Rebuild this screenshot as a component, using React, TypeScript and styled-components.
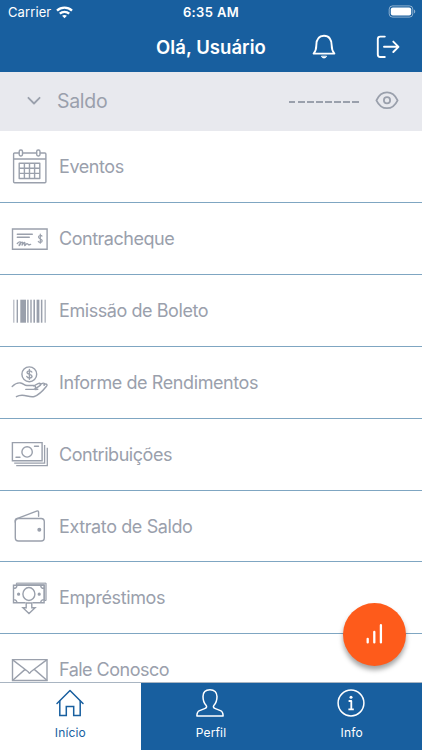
import React from "react";
import styled, { createGlobalStyle } from "styled-components";

const BLUE = "#185f9f";
const GRAY = "#9aa0ac";

const GlobalStyle = createGlobalStyle`
  * { box-sizing: border-box; }
  body { margin: 0; background: #fff; font-family: Inter, "Liberation Sans", sans-serif; }
`;

const Screen = styled.div`
  height: 750px;
  width: 422px;
  display: flex;
  flex-direction: column;
  overflow: hidden;
  position: relative;
  background: #fff;
`;

const Top = styled.header`
  flex: none;
  height: 72px;
  background: ${BLUE};
  color: #fff;
`;

const StatusBar = styled.div`
  height: 24px;
  padding: 0 8px;
  display: grid;
  grid-template-columns: 1fr auto 1fr;
  align-items: center;
`;

const Carrier = styled.div`
  display: flex;
  align-items: center;
  gap: 5px;
  font-size: 13px;
  letter-spacing: 0.1px;
`;

const Clock = styled.div`
  font-size: 13px;
  font-weight: 600;
  letter-spacing: 0.35px;
`;

const Battery = styled.svg`
  justify-self: end;
  margin: 0 -2px 1px 0;
`;

const TitleBar = styled.div`
  height: 45px;
  display: grid;
  grid-template-columns: 1fr auto 1fr;
  align-items: center;
`;

const Title = styled.h1`
  grid-column: 2;
  margin: 0;
  font-size: 18.5px;
  font-weight: 600;
  letter-spacing: 0.05px;
`;

const Actions = styled.div`
  display: flex;
  justify-content: flex-end;
  gap: 37px;
  padding-right: 21px;
`;

const Balance = styled.div`
  flex: none;
  height: 58.5px;
  background: #e8e9ee;
  color: ${GRAY};
  display: flex;
  align-items: center;
  padding: 0 23px 0 26px;
`;

const BalanceLabel = styled.span`
  margin-left: 15px;
  font-size: 19.5px;
  letter-spacing: -0.3px;
  flex: 1;
`;

const Masked = styled.div`
  display: flex;
  gap: 2.4px;
  margin: 1px 16px 0 0;
`;

const Dash = styled.i`
  width: 6.7px;
  height: 1.5px;
  background: ${GRAY};
`;

const List = styled.main`
  flex: 1;
  min-height: 0;
  overflow: hidden;
  padding-top: 1px;
`;

const Row = styled.div`
  height: 71.83px;
  display: flex;
  align-items: center;
  padding-left: 10px;
  border-bottom: 1px solid #7fa6c2;
  color: ${GRAY};
`;

const RowLabel = styled.span<{ $spacing: number }>`
  margin-left: 9px;
  font-size: 18px;
  letter-spacing: ${(p) => p.$spacing}px;
  white-space: nowrap;
`;

const Tabs = styled.nav`
  flex: none;
  height: 68px;
  display: grid;
  grid-template-columns: repeat(3, 1fr);
  border-top: 1px solid #a9b5c2;
  background: ${BLUE};
`;

const Tab = styled.div<{ $active?: boolean }>`
  display: flex;
  flex-direction: column;
  align-items: center;
  padding-top: 4px;
  gap: 6px;
  font-size: 12px;
  line-height: 16px;
  letter-spacing: 0.15px;
  background: ${(p) => (p.$active ? "#fff" : BLUE)};
  color: ${(p) => (p.$active ? BLUE : "#fff")};
`;

const TabIcon = styled.svg`
  flex: none;
  display: block;
  margin-right: 1px;
  fill: none;
  stroke: currentColor;
  stroke-width: 1.5;
  stroke-linecap: round;
  stroke-linejoin: round;
`;

const Fab = styled.button`
  position: absolute;
  left: 343px;
  top: 603px;
  width: 63px;
  height: 63px;
  padding: 0;
  border: 0;
  border-radius: 50%;
  background: #fe5b1b;
  box-shadow: 0 4px 5px rgba(0, 0, 0, 0.36);
  display: flex;
  align-items: center;
  justify-content: center;
`;

const LineIcon = styled.svg`
  flex: none;
  display: block;
  fill: none;
  stroke: currentColor;
  stroke-linecap: round;
  stroke-linejoin: round;
`;

const RowIcon = ({ children }: { children: React.ReactNode }) => (
  <LineIcon width="40" height="44" viewBox="0 0 40 44" strokeWidth="1.4">{children}</LineIcon>
);

const Calendar = () => (
  <RowIcon>
    <path d="M9 8H4.6a1 1 0 0 0-1 1v27.7a1 1 0 0 0 1 1h30.3a1 1 0 0 0 1-1V9a1 1 0 0 0-1-1h-4.5M12.7 8h13.8M3.6 14h32.3" />
    <rect x="9.2" y="5" width="3.3" height="6" rx="1.4" />
    <rect x="26.7" y="5" width="3.3" height="6" rx="1.4" />
    <path d="M9.2 18.2h20.6v15.3H9.2zM14.4 18.2v15.3M19.5 18.2v15.3M24.6 18.2v15.3M9.2 23.3h20.6M9.2 28.4h20.6" />
  </RowIcon>
);

const Cheque = () => (
  <RowIcon>
    <path strokeLinejoin="miter" d="M2.5 12h34.6v20.3H2.5z" />
    <path d="M7.3 17.3h15M7.3 20.3h12M7.3 26.4c2.4-2.4 4-1.7 3 .6s-2 1.5-.3-.4 3-2 2.4 0-.5 2 .6.2 2.2-1.7 1.8.2-.2 2 1 .6 1.5-1 2.4-.2 1.4.2 2.4 0" />
    <path d="M32 19.1c-.7-1-3.5-1-3.5 1 0 2.1 3.7 1.6 3.7 3.7 0 2-3 2.1-3.9.7M30.3 17v9.2" strokeWidth="1.2" />
  </RowIcon>
);

const bars: [number, number][] = [
  [3.4, 0.9], [6.6, 1.4], [10.3, 5.7], [17.2, 1.4], [20.3, 1.4], [23.4, 1.6], [26.6, 2.8], [30.9, 1.5], [34.6, 1.1],
];

const Barcode = () => (
  <RowIcon>
    {bars.map(([x, w]) => (
      <rect key={x} x={x} y="10.7" width={w} height="23" fill="currentColor" stroke="none" />
    ))}
  </RowIcon>
);

const Hand = () => (
  <RowIcon>
    <circle cx="19.3" cy="14.3" r="7.4" />
    <path d="M21.8 12c-.8-1.7-4.8-1.5-4.8.5 0 2.4 5 1.2 5 3.8 0 2.1-4.3 2.2-5.2.2M19.4 9.4v9.8" />
    <path d="M2.2 26.4c2.2-2.1 5.6-4 8.4-3.4 3.3.7 3.5 2.5 6.3 2.5h6.6c2.7 0 2.8 3.9 0 3.9H15.8M23.5 26l4.6-2.4c2.2-1 3.5 1 1.8 2.1l-4.4 3M30 24.5l2.4-1.1c1.7-.8 3.1.6 1.8 1.8M33.8 24.9l1.2-.7c1.7-.7 2.7.8 1.5 2.1-3 3.7-7.5 8.8-12.2 10.2-5.9 1.7-10.8-4.1-17.9.2" />
    <path d="M25 29.5l2.8-.3" />
  </RowIcon>
);

const Banknotes = () => (
  <RowIcon>
    <g strokeLinejoin="miter">
      <path d="M2.4 10.6h29.7v18.2H2.4z" />
      <path d="M34.6 13v18.2H4.2M37.3 15.7v18H6.2" strokeLinecap="butt" strokeWidth="1.3" />
    </g>
    <circle cx="17.1" cy="19.9" r="5.2" />
    <path d="M24.5 14.3h4M6 25.2h4" />
  </RowIcon>
);

const Wallet = () => (
  <RowIcon>
    <rect x="5.3" y="14.5" width="29" height="22.5" rx="3.2" />
    <path d="M5.3 18c-.4-2.1.4-3.2 2.3-3.7L26.6 7.1c1.4-.5 2 .1 2 1.2v4" />
    <circle cx="29.3" cy="25.8" r="1.3" fill="currentColor" />
  </RowIcon>
);

const Loan = () => (
  <RowIcon>
    <g strokeLinejoin="miter">
      <path d="M6.4 8.6V7.1h29.7v17.4h-1.8V8.9H6.4z" fill="currentColor" fillOpacity=".4" strokeWidth="1" />
      <path d="M15 26.8H3.5V9.2h30.6v17.6H23M3.5 12.4c2 0 3.4-1.3 3.4-3.2M34.1 12.4c-2 0-3.4-1.3-3.4-3.2M3.5 23.6c2 0 3.4 1.3 3.4 3.2M34.1 23.6c-2 0-3.4 1.3-3.4 3.2" />
      <path d="M16.2 27v4.8h-3.3l6.1 5.8 6.1-5.8h-3.3V27z" />
    </g>
    <ellipse cx="18.9" cy="18" rx="6" ry="6.5" />
    <circle cx="8.6" cy="18.2" r=".9" fill="currentColor" />
    <circle cx="29.2" cy="18.2" r=".9" fill="currentColor" />
  </RowIcon>
);

const Envelope = () => (
  <RowIcon>
    <path strokeLinejoin="miter" d="M2.5 11.6h34.5v20.9H2.5z" />
    <path d="M2.7 11.9l14.8 11.4c1.2.9 1.5 1.9 2 1.9s.8-1 2-1.9l15.2-11.4M2.8 32.2l12.3-10.8M36.8 32.2L24.3 21.4" />
  </RowIcon>
);

const rows = [
  { label: "Eventos", Icon: Calendar, spacing: -0.42 },
  { label: "Contracheque", Icon: Cheque, spacing: -0.48 },
  { label: "Emissão de Boleto", Icon: Barcode, spacing: -0.43 },
  { label: "Informe de Rendimentos", Icon: Hand, spacing: -0.41 },
  { label: "Contribuições", Icon: Banknotes, spacing: -0.46 },
  { label: "Extrato de Saldo", Icon: Wallet, spacing: -0.39 },
  { label: "Empréstimos", Icon: Loan, spacing: -0.4 },
  { label: "Fale Conosco", Icon: Envelope, spacing: -0.52 },
];

export default function App() {
  return (
    <Screen>
      <GlobalStyle />
      <Top>
        <StatusBar>
          <Carrier>
            Carrier
            <svg width="17" height="13" viewBox="0 0 17 13" fill="none" stroke="#fff" strokeWidth="2.3">
              <path d="M1 4.7c4.2-4 10.8-4 15 0M3.8 7.7c2.6-2.5 6.8-2.5 9.4 0" />
              <path d="M8.5 12.2L6.1 9.8c1.3-1.2 3.5-1.2 4.8 0z" fill="#fff" stroke="none" />
            </svg>
          </Carrier>
          <Clock>6:35 AM</Clock>
          <Battery width="28" height="13" viewBox="0 0 28 13">
            <rect x="1.2" y=".9" width="23.6" height="11.2" rx="3.3" fill="none" stroke="#fff" strokeOpacity=".5" />
            <rect x="2.8" y="2.5" width="20.4" height="8" rx="2" fill="#fff" />
            <path d="M26 4.5c1.7.8 1.7 3.2 0 4z" fill="#fff" fillOpacity=".5" />
          </Battery>
        </StatusBar>
        <TitleBar>
          <Title>Olá, Usuário</Title>
          <Actions>
            <LineIcon width="28" height="28" viewBox="0 0 28 28" strokeWidth="1.9">
              <path d="M3.6 20.6h20.8c-1.8-2-2.7-3.4-2.7-8C21.7 6.2 19 2.8 14 2.8s-7.7 3.4-7.7 9.8c0 4.6-.9 6-2.7 8z" />
              <path d="M11.5 23.5c.7 2.1 4.3 2.1 5 0z" fill="#fff" strokeWidth=".8" />
            </LineIcon>
            <LineIcon width="26" height="28" viewBox="0 0 26 28" strokeWidth="1.9">
              <path d="M9.8 3.6H5.2C3.7 3.6 2.8 4.6 2.8 6.1v15.4c0 1.5.9 2.5 2.4 2.5h4.6M9 13.8h14.2M18.3 8.6l5.2 5.2-5.2 5.2" />
            </LineIcon>
          </Actions>
        </TitleBar>
      </Top>
      <Balance>
        <LineIcon width="16" height="16" viewBox="0 0 16 16" strokeWidth="1.8">
          <path d="M2.4 4.8L8 10.5l5.6-5.7" />
        </LineIcon>
        <BalanceLabel>Saldo</BalanceLabel>
        <Masked>{Array.from({ length: 8 }, (_, i) => <Dash key={i} />)}</Masked>
        <LineIcon width="24" height="20" viewBox="0 0 24 20" strokeWidth="1.8">
          <path d="M1.4 9.3C3.6 4.7 7.2 1.4 12 1.4S20.4 4.7 22.6 9.3c-2.2 4.6-5.8 7.9-10.6 7.9S3.6 13.9 1.4 9.3z" />
          <circle cx="12" cy="9.3" r="3.1" />
        </LineIcon>
      </Balance>
      <List>
        {rows.map(({ label, Icon, spacing }) => (
          <Row key={label}>
            <Icon />
            <RowLabel $spacing={spacing}>{label}</RowLabel>
          </Row>
        ))}
      </List>
      <Tabs>
        <Tab $active>
          <TabIcon width="32" height="32" viewBox="0 0 32 32">
            <path d="M3 16.5L16 3.5l13 13" />
            <path d="M5.8 14v14.5h6.5v-9h7.4v9h6.5V14" strokeLinejoin="miter" />
          </TabIcon>
          Início
        </Tab>
        <Tab>
          <TabIcon width="32" height="32" viewBox="0 0 32 32">
            <path d="M16 2.7c-4.3 0-7 2.5-7 6.8 0 4 1 6.8 3.2 9 .9 1 .2 2.4-1 2.9l-5.6 2.2c-2 .8-2.7 2.1-2.7 5.3h26.2c0-3.2-.7-4.5-2.7-5.3l-5.6-2.2c-1.2-.5-1.9-1.9-1-2.9 2.2-2.2 3.2-5 3.2-9 0-4.3-2.7-6.8-7-6.8z" />
          </TabIcon>
          Perfil
        </Tab>
        <Tab>
          <TabIcon width="32" height="32" viewBox="0 0 32 32">
            <circle cx="16" cy="16" r="12.9" />
            <circle cx="16" cy="10.2" r="1.5" fill="currentColor" stroke="none" />
            <path d="M13.6 14h2.7v8.2M13.4 22.4h5.4" strokeWidth="1.8" strokeLinecap="butt" />
          </TabIcon>
          Info
        </Tab>
      </Tabs>
      <Fab aria-label="Gráfico">
        <svg width="20" height="24" viewBox="0 0 20 24" fill="none" stroke="#fff" strokeWidth="2.3" strokeLinecap="round">
          <path d="M2.7 15.8v3.6M9.3 9v10.4M15.9 2.2v17.2" />
        </svg>
      </Fab>
    </Screen>
  );
}
